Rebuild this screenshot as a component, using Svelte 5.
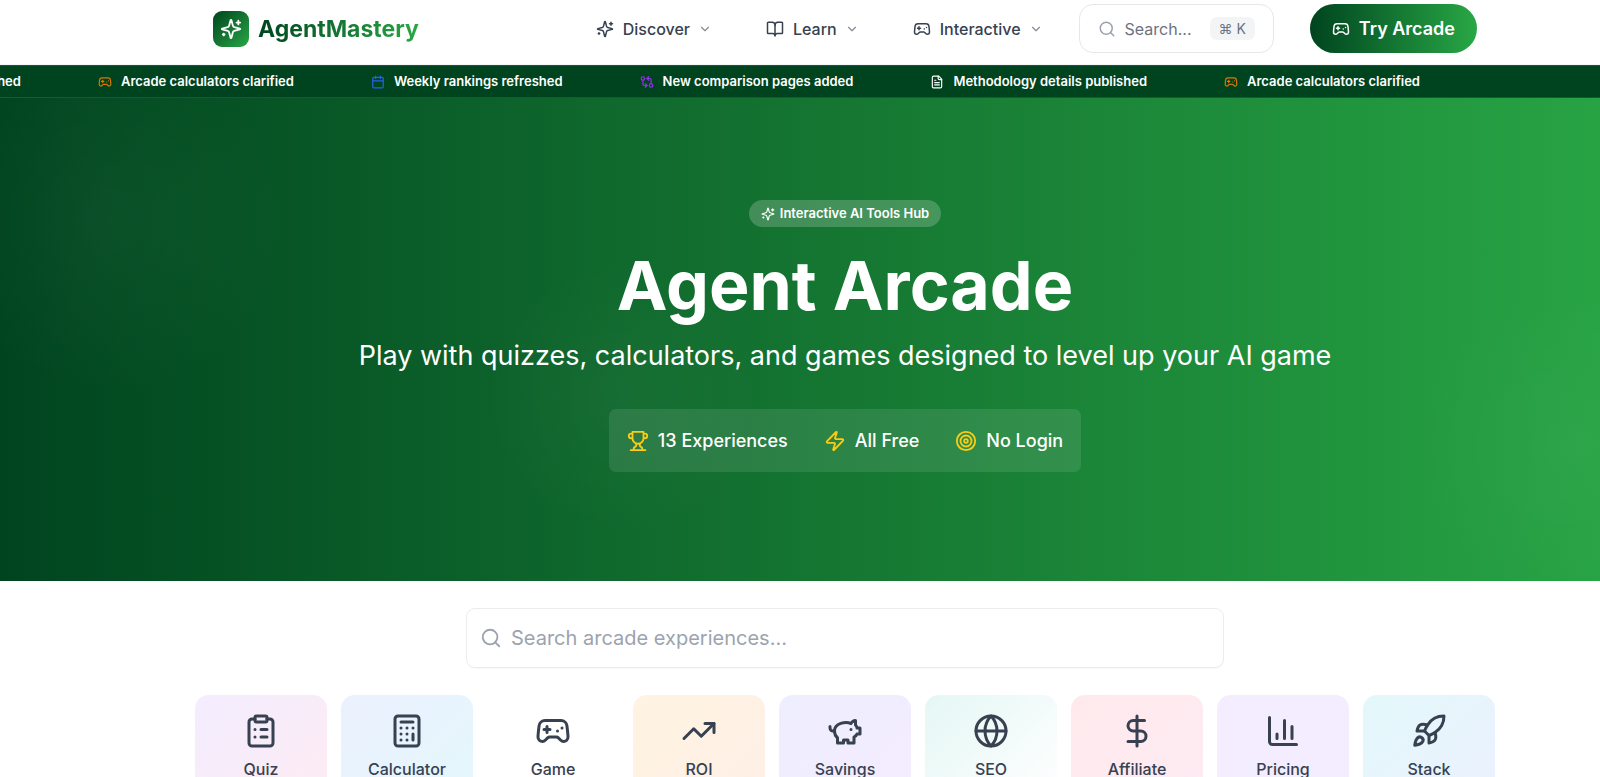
<script>
  const icons = {
    sparkles: '<path d="M9.937 15.5A2 2 0 0 0 8.5 14.063l-6.135-1.582a.5.5 0 0 1 0-.962L8.5 9.936A2 2 0 0 0 9.937 8.5l1.582-6.135a.5.5 0 0 1 .963 0L14.063 8.5A2 2 0 0 0 15.5 9.937l6.135 1.581a.5.5 0 0 1 0 .964L15.5 14.063a2 2 0 0 0-1.437 1.437l-1.582 6.135a.5.5 0 0 1-.963 0z"/><path d="M20 3v4M22 5h-4M4 17v2M5 18H3"/>',
    book: '<path d="M12 7v14"/><path d="M3 18a1 1 0 0 1-1-1V4a1 1 0 0 1 1-1h5a4 4 0 0 1 4 4 4 4 0 0 1 4-4h5a1 1 0 0 1 1 1v13a1 1 0 0 1-1 1h-6a3 3 0 0 0-3 3 3 3 0 0 0-3-3z"/>',
    gamepad: '<path d="M6 11h4M8 9v4M15 12h.01M18 10h.01"/><path d="M17.32 5H6.68a4 4 0 0 0-3.978 3.59c-.006.052-.01.101-.017.152C2.604 9.416 2 14.456 2 16a3 3 0 0 0 3 3c1 0 1.5-.5 2-1l1.414-1.414A2 2 0 0 1 9.828 16h4.344a2 2 0 0 1 1.414.586L17 18c.5.5 1 1 2 1a3 3 0 0 0 3-3c0-1.545-.604-6.584-.685-7.258-.007-.05-.011-.1-.017-.151A4 4 0 0 0 17.32 5z"/>',
    chevron: '<path d="m6 9 6 6 6-6"/>',
    search: '<circle cx="11" cy="11" r="8"/><path d="m21 21-4.3-4.3"/>',
    calendar: '<path d="M8 2v4M16 2v4M3 10h18"/><rect width="18" height="18" x="3" y="4" rx="2"/>',
    compare: '<circle cx="5" cy="6" r="3"/><path d="M12 6h5a2 2 0 0 1 2 2v7"/><path d="m15 9-3-3 3-3"/><circle cx="19" cy="18" r="3"/><path d="M12 18H7a2 2 0 0 1-2-2V9"/><path d="m9 15 3 3-3 3"/>',
    file: '<path d="M15 2H6a2 2 0 0 0-2 2v16a2 2 0 0 0 2 2h12a2 2 0 0 0 2-2V7z"/><path d="M14 2v4a2 2 0 0 0 2 2h4M10 9H8M16 13H8M16 17H8"/>',
    trophy: '<path d="M6 9H4.5a2.5 2.5 0 0 1 0-5H6M18 9h1.5a2.5 2.5 0 0 0 0-5H18M4 22h16M10 14.66V17c0 .55-.47.98-.97 1.21C7.85 18.75 7 20.24 7 22M14 14.66V17c0 .55.47.98.97 1.21C16.15 18.75 17 20.24 17 22M18 2H6v7a6 6 0 0 0 12 0V2Z"/>',
    zap: '<path d="M4 14a1 1 0 0 1-.78-1.63l9.9-10.2a.5.5 0 0 1 .86.46l-1.92 6.02A1 1 0 0 0 13 10h7a1 1 0 0 1 .78 1.63l-9.9 10.2a.5.5 0 0 1-.86-.46l1.92-6.02A1 1 0 0 0 11 14z"/>',
    target: '<circle cx="12" cy="12" r="10"/><circle cx="12" cy="12" r="6"/><circle cx="12" cy="12" r="2"/>',
    clipboard: '<rect width="8" height="4" x="8" y="2" rx="1" ry="1"/><path d="M16 4h2a2 2 0 0 1 2 2v14a2 2 0 0 1-2 2H6a2 2 0 0 1-2-2V6a2 2 0 0 1 2-2h2M12 11h4M12 16h4M8 11h.01M8 16h.01"/>',
    calculator: '<rect width="16" height="20" x="4" y="2" rx="2"/><path d="M8 6h8M16 14v4M16 10h.01M12 10h.01M8 10h.01M12 14h.01M8 14h.01M12 18h.01M8 18h.01"/>',
    trending: '<path d="M22 7 13.5 15.5 8.5 10.5 2 17"/><path d="M16 7h6v6"/>',
    piggy: '<path d="M19 5c-1.5 0-2.8 1.4-3 2-3.5-1.5-11-.3-11 5 0 1.8 0 3 2 4.5V20h4v-2h3v2h4v-4c1-.5 1.7-1 2-2h2v-4h-2c0-1-.5-1.5-1-2V5z"/><path d="M2 9v1c0 1.1.9 2 2 2h1M16 11h.01"/>',
    globe: '<circle cx="12" cy="12" r="10"/><path d="M12 2a14.5 14.5 0 0 0 0 20 14.5 14.5 0 0 0 0-20M2 12h20"/>',
    dollar: '<path d="M12 2v20M17 5H9.5a3.5 3.5 0 0 0 0 7h5a3.5 3.5 0 0 1 0 7H6"/>',
    chart: '<path d="M3 3v16a2 2 0 0 0 2 2h16M18 17V9M13 17V5M8 17v-3"/>',
    rocket: '<path d="M4.5 16.5c-1.5 1.26-2 5-2 5s3.74-.5 5-2c.71-.84.7-2.13-.09-2.91a2.18 2.18 0 0 0-2.91-.09zM12 15l-3-3a22 22 0 0 1 2-3.95A12.88 12.88 0 0 1 22 2c0 2.72-.78 7.5-6 11a22.35 22.35 0 0 1-4 2z"/><path d="M9 12H4s.55-3.03 2-4c1.62-1.08 5 0 5 0M12 15v5s3.03-.55 4-2c1.08-1.62 0-5 0-5"/>',
  };

  const navItems = [
    { label: 'Discover', icon: 'sparkles' },
    { label: 'Learn', icon: 'book' },
    { label: 'Interactive', icon: 'gamepad' },
  ];

  const updates = [
    { text: 'Methodology details published', icon: 'file', tone: 'white' },
    { text: 'Arcade calculators clarified', icon: 'gamepad', tone: 'amber' },
    { text: 'Weekly rankings refreshed', icon: 'calendar', tone: 'blue' },
    { text: 'New comparison pages added', icon: 'compare', tone: 'purple' },
    { text: 'Methodology details published', icon: 'file', tone: 'white' },
    { text: 'Arcade calculators clarified', icon: 'gamepad', tone: 'amber' },
  ];

  const stats = [
    { text: '13 Experiences', icon: 'trophy' },
    { text: 'All Free', icon: 'zap' },
    { text: 'No Login', icon: 'target' },
  ];

  const categories = [
    { name: 'Quiz', icon: 'clipboard' },
    { name: 'Calculator', icon: 'calculator' },
    { name: 'Game', icon: 'gamepad' },
    { name: 'ROI', icon: 'trending' },
    { name: 'Savings', icon: 'piggy' },
    { name: 'SEO', icon: 'globe' },
    { name: 'Affiliate', icon: 'dollar' },
    { name: 'Pricing', icon: 'chart' },
    { name: 'Stack', icon: 'rocket' },
  ];

  let query = $state('');
</script>

{#snippet icon(name)}
  <svg class="icon" viewBox="0 0 24 24" aria-hidden="true">{@html icons[name]}</svg>
{/snippet}

<div class="page">
  <header class="header">
    <div class="header-inner">
      <a class="brand" href="#home">
        <span class="brand-mark">{@render icon('sparkles')}</span>
        <span class="brand-name">AgentMastery</span>
      </a>
      <div class="header-right">
        <nav class="nav">
          {#each navItems as item}
            <button class="nav-item" type="button">
              {@render icon(item.icon)}
              <span class="nav-label">{item.label}</span>
              <span class="chevron">{@render icon('chevron')}</span>
            </button>
          {/each}
        </nav>
        <button class="quick-search" type="button">
          {@render icon('search')}
          <span>Search...</span>
          <kbd>⌘ K</kbd>
        </button>
        <a class="cta" href="#arcade">
          {@render icon('gamepad')}
          <span>Try Arcade</span>
        </a>
      </div>
    </div>
  </header>

  <div class="ticker">
    {#each updates as update}
      <div class="update">
        <span class="update-icon {update.tone}">{@render icon(update.icon)}</span>
        <span>{update.text}</span>
      </div>
    {/each}
  </div>

  <section class="hero">
    <div class="pill">
      {@render icon('sparkles')}
      <span>Interactive AI Tools Hub</span>
    </div>
    <h1>Agent Arcade</h1>
    <p class="tagline">Play with quizzes, calculators, and games designed to level up your AI game</p>
    <div class="stats">
      {#each stats as stat}
        <div class="stat">
          {@render icon(stat.icon)}
          <span>{stat.text}</span>
        </div>
      {/each}
    </div>
  </section>

  <main class="main">
    <label class="search">
      {@render icon('search')}
      <input type="text" placeholder="Search arcade experiences..." aria-label="Search arcade experiences" bind:value={query} />
    </label>
    <div class="categories">
      {#each categories as category}
        <button class="category {category.name.toLowerCase()}" type="button">
          {@render icon(category.icon)}
          <span>{category.name}</span>
        </button>
      {/each}
    </div>
  </main>
</div>

<style>
  :global(body) {
    background: #ffffff;
  }

  .page {
    --dark: #00441f;
    --light: #28a745;
    font-family: Inter, "Liberation Sans", sans-serif;
    font-size: 16px;
    line-height: 24px;
    color: #374151;
    overflow: hidden;
  }

  .page * {
    box-sizing: border-box;
  }

  button,
  input,
  kbd {
    font: inherit;
    color: inherit;
  }

  button {
    border: 0;
    background: none;
    cursor: pointer;
  }

  a {
    text-decoration: none;
  }

  .icon {
    display: block;
    flex: none;
    width: 18px;
    height: 18px;
    fill: none;
    stroke: currentColor;
    stroke-width: 2;
    stroke-linecap: round;
    stroke-linejoin: round;
  }

  /* header */
  .header {
    padding: 4px 0 11px 90px;
    border-bottom: 1px solid #f3f4f6;
    background: #ffffff;
  }

  .header-inner {
    display: flex;
    align-items: center;
    justify-content: space-between;
    max-width: 1264px;
    margin: 0 auto;
  }

  .brand {
    display: flex;
    align-items: center;
    gap: 9px;
  }

  .brand-mark {
    display: grid;
    place-items: center;
    width: 36px;
    height: 36px;
    border-radius: 9px;
    background: linear-gradient(135deg, var(--dark), var(--light));
    color: #ffffff;
  }

  .brand-mark .icon {
    width: 22px;
    height: 22px;
  }

  .brand-name {
    font-size: 23px;
    font-weight: 700;
    line-height: 32px;
    background: linear-gradient(90deg, var(--dark), var(--light));
    background-clip: text;
    color: transparent;
  }

  .header-right {
    display: flex;
    align-items: center;
  }

  .nav {
    display: flex;
    gap: 18px;
    margin-right: 18px;
  }

  .nav-item {
    display: flex;
    align-items: center;
    padding: 9px 18px;
    font-weight: 500;
  }

  .nav-label {
    margin: 0 8px 0 9px;
  }

  .chevron {
    opacity: 0.6;
  }

  .chevron .icon {
    width: 14px;
    height: 14px;
  }

  .quick-search {
    display: flex;
    align-items: center;
    height: 49px;
    padding: 0 18px;
    border: 1px solid #e5e7eb;
    border-radius: 14px;
    color: #6b7280;
  }

  .quick-search .icon {
    margin-right: 9px;
    color: #9ca3af;
  }

  kbd {
    margin-left: 18px;
    padding: 0 9px;
    border-radius: 7px;
    background: #f3f4f6;
    font-size: 14px;
    line-height: 23px;
  }

  .cta {
    display: flex;
    align-items: center;
    gap: 9px;
    height: 49px;
    margin-left: 36px;
    padding: 0 22px;
    border-radius: 25px;
    background: linear-gradient(90deg, var(--dark), var(--light));
    color: #ffffff;
    font-size: 18px;
    font-weight: 600;
  }

  /* ticker */
  .ticker {
    display: flex;
    justify-content: flex-end;
    gap: 77px;
    padding: 5px 180px 5px 0;
    border-top: 1px solid #1a573a;
    border-bottom: 1px solid #1a573a;
    background: var(--dark);
    color: #ffffff;
    font-size: 13px;
    font-weight: 600;
    line-height: 21px;
    white-space: nowrap;
  }

  .update {
    display: flex;
    align-items: center;
    gap: 9px;
  }

  .update-icon .icon {
    width: 14px;
    height: 14px;
  }

  .amber {
    color: #d97706;
  }

  .blue {
    color: #2563eb;
  }

  .purple {
    color: #9333ea;
  }

  /* hero */
  .hero {
    display: flex;
    flex-direction: column;
    align-items: center;
    padding: 102px 0 109px 90px;
    background:
      radial-gradient(circle at 7% 25%, rgba(255, 255, 255, 0.03), transparent 180px),
      radial-gradient(circle at 39% 62%, rgba(255, 255, 255, 0.03), transparent 140px),
      radial-gradient(circle at 98% 72%, rgba(255, 255, 255, 0.03), transparent 160px),
      linear-gradient(90deg, var(--dark), #157632 52%, #27a344);
    color: #ffffff;
    text-align: center;
  }

  .pill {
    display: flex;
    align-items: center;
    gap: 5px;
    padding: 3px 12px;
    border-radius: 14px;
    background: rgba(255, 255, 255, 0.2);
    font-size: 13px;
    font-weight: 600;
    line-height: 21px;
  }

  .pill .icon {
    width: 14px;
    height: 14px;
  }

  h1 {
    margin: 22px 0 17px;
    font-size: 68px;
    font-weight: 700;
    line-height: 72px;
  }

  .tagline {
    margin: 0;
    font-size: 27px;
    line-height: 36px;
  }

  .stats {
    display: flex;
    gap: 36px;
    margin-top: 35px;
    padding: 18px;
    border-radius: 7px;
    background: rgba(255, 255, 255, 0.1);
    font-size: 18px;
    font-weight: 500;
    line-height: 27px;
  }

  .stat {
    display: flex;
    align-items: center;
    gap: 9px;
  }

  .stat .icon {
    width: 22px;
    height: 22px;
    color: #facc15;
  }

  /* search and categories */
  .main {
    padding: 27px 0 54px 90px;
  }

  .search {
    display: flex;
    align-items: center;
    gap: 9px;
    max-width: 758px;
    height: 60px;
    margin: 0 auto 27px;
    padding: 0 13px;
    border: 1px solid #ebecef;
    border-radius: 9px;
    box-shadow: 0 1px 1px rgba(0, 0, 0, 0.03);
    color: #9ca3af;
  }

  .search .icon {
    width: 22px;
    height: 22px;
  }

  .search input {
    flex: 1;
    min-width: 0;
    padding: 0;
    border: 0;
    outline: 0;
    background: none;
    color: #374151;
    font-size: 20px;
    line-height: 28px;
  }

  .search input::placeholder {
    color: #9ca3af;
    opacity: 1;
  }

  .categories {
    display: grid;
    grid-template-columns: repeat(9, 1fr);
    gap: 14px;
    max-width: 1300px;
    margin: 0 auto;
  }

  .category {
    display: flex;
    flex-direction: column;
    align-items: center;
    gap: 8px;
    padding: 18px 9px;
    border-radius: 14px;
    font-weight: 500;
  }

  .category .icon {
    width: 36px;
    height: 36px;
  }

  .quiz {
    background: linear-gradient(135deg, #f3edff, #fdebf3);
  }

  .calculator {
    background: linear-gradient(135deg, #ebf1fe, #e4f7fc);
  }

  .roi {
    background: linear-gradient(135deg, #fef4e2, #ffefe6);
  }

  .savings {
    background: linear-gradient(135deg, #eeeefe, #f4ecfe);
  }

  .seo {
    background: linear-gradient(135deg, #e4f7f4, #ffffff);
  }

  .affiliate {
    background: linear-gradient(135deg, #ffe9ec, #fdebf3);
  }

  .pricing {
    background: #f3edff;
  }

  .stack {
    background: linear-gradient(135deg, #e3f8fb, #ebf1fe);
  }
</style>
